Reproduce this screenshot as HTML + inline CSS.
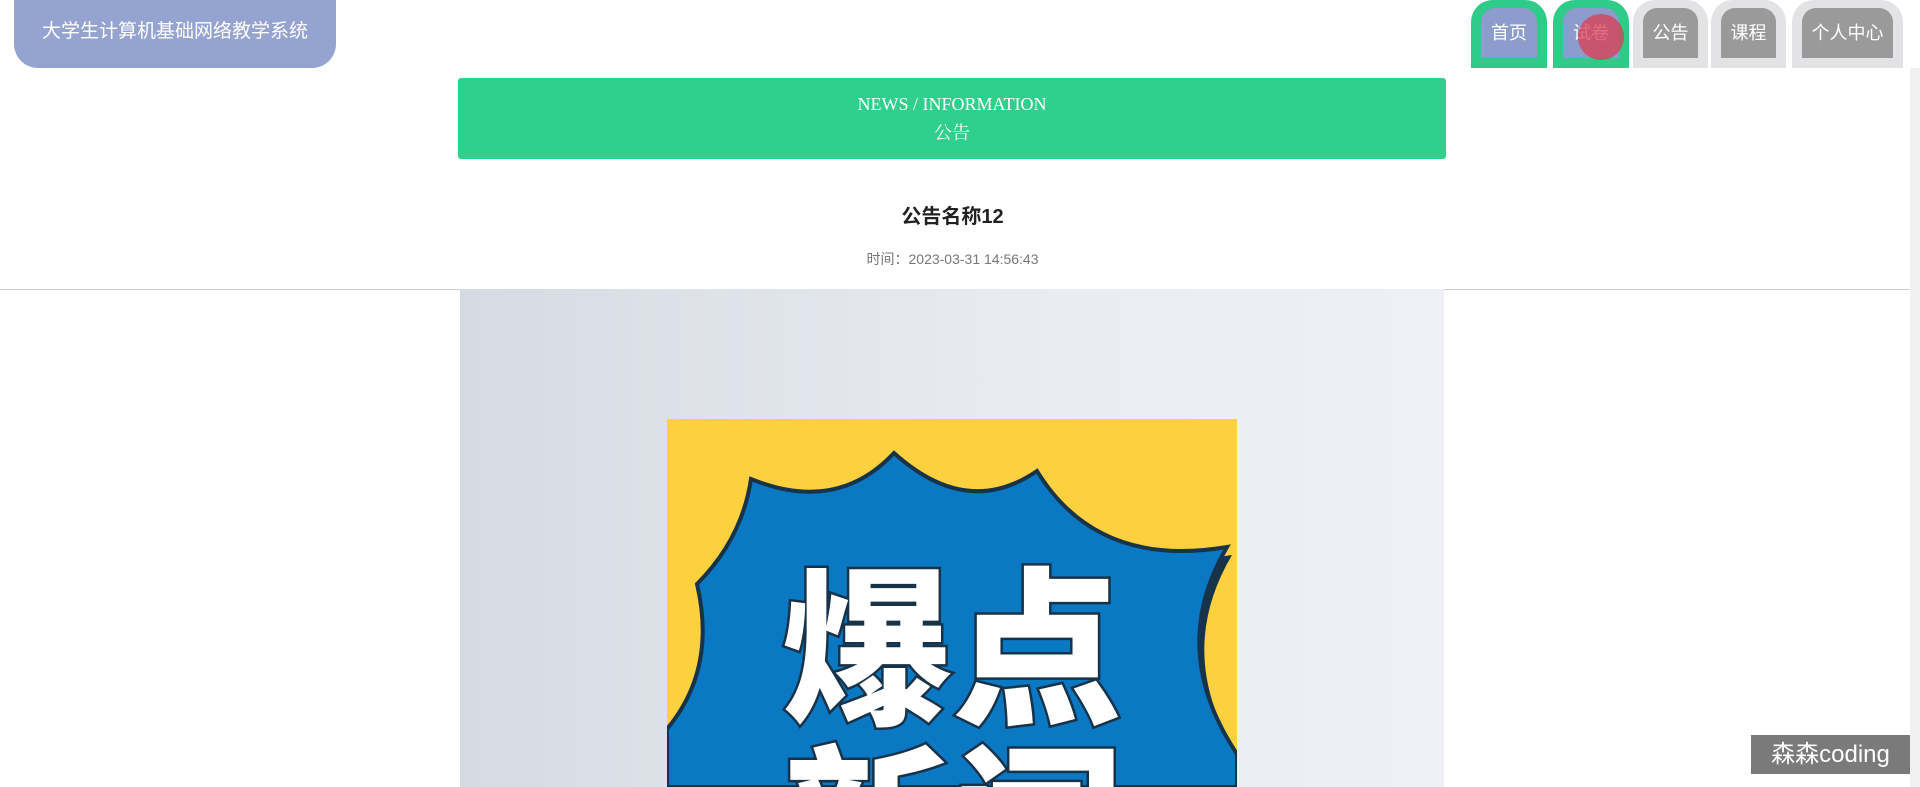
<!DOCTYPE html>
<html><head><meta charset="utf-8"><style>
*{margin:0;padding:0;box-sizing:border-box}
html,body{width:1920px;height:787px;overflow:hidden}
body{background:#fff;font-family:"Liberation Sans","Noto Sans CJK SC",sans-serif;position:relative}
.title{position:absolute;left:14px;top:0;width:322px;height:68px;background:#94a3cf;border-radius:0 0 24px 24px;color:#fff;font-size:19px;line-height:64px;text-align:center}
.tab{position:absolute;top:0;height:68px;border-radius:22px 22px 0 0}
.tab .in{position:absolute;left:10px;right:10px;top:8px;height:50px;border-radius:14px 14px 0 0;color:#fff;font-size:18px;text-align:center;line-height:50px}
.g{background:#2ecc88}.g .in{background:#8c9ccc}
.w{background:#e3e3e6}.w .in{background:#9a9a9a}
.banner{position:absolute;left:458px;top:78px;width:988px;height:81px;background:#2ed08c;border-radius:3px;color:#fff;text-align:center;font-family:"Liberation Serif","Noto Serif CJK SC",serif;font-size:18px;line-height:29px;padding-top:12px}
.h{position:absolute;left:0;width:1905px;text-align:center}
.img{position:absolute;left:460px;top:289px;width:984px;height:498px;background:linear-gradient(90deg,#d6dae2,#e9ecf2 60%,#eef0f6)}
.wm{position:absolute;left:1751px;top:735px;width:159px;height:39px;background:#7a7a7a;color:#fff;font-size:24px;line-height:39px;text-align:center}
</style></head><body>
<div class="title">大学生计算机基础网络教学系统</div>
<div class="tab g" style="left:1471px;width:76px"><div class="in">首页</div></div>
<div class="tab g" style="left:1553px;width:76px"><div class="in">试卷</div></div>
<div style="position:absolute;left:1578px;top:14px;width:46px;height:46px;border-radius:50%;background:rgba(220,60,80,.75)"></div>
<div class="tab w" style="left:1633px;width:75px"><div class="in">公告</div></div>
<div class="tab w" style="left:1711px;width:75px"><div class="in">课程</div></div>
<div class="tab w" style="left:1792px;width:111px"><div class="in">个人中心</div></div>
<div style="position:absolute;left:1910px;top:68px;width:10px;height:719px;background:#f1f1f1"></div>
<div class="banner">NEWS / INFORMATION<br>公告</div>
<div class="h" style="top:200px;font-size:20px;font-weight:bold;color:#222">公告名称12</div>
<div class="h" style="top:249px;font-size:14px;color:#777">时间：2023-03-31 14:56:43</div>
<div style="position:absolute;left:0;top:289px;width:1910px;height:1px;background:#ccc"></div>
<div class="img"></div>
<svg style="position:absolute;left:667px;top:419px" width="570" height="368" viewBox="0 0 570 368">
<rect width="570" height="368" fill="#fcd03f"/>
<path id="sb" d="M0,310 Q50,250 30,165 Q75,120 84,60 Q170,95 227,34 Q300,100 370,52 Q430,150 560,128 Q500,230 570,335 L570,368 L0,368 Z" fill="#173349" transform="translate(5,8)"/>
<path d="M0,310 Q50,250 30,165 Q75,120 84,60 Q170,95 227,34 Q300,100 370,52 Q430,150 560,128 Q500,230 570,335 L570,368 L0,368 Z" fill="#0a78c2" stroke="#173349" stroke-width="4"/>
<text x="115" y="292" font-family="Noto Sans CJK SC,sans-serif" font-weight="900" font-size="170" fill="#fff" stroke="#173349" stroke-width="5" paint-order="stroke">爆点</text>
<text x="115" y="470" font-family="Noto Sans CJK SC,sans-serif" font-weight="900" font-size="170" fill="#fff" stroke="#173349" stroke-width="5" paint-order="stroke">新闻</text>
</svg>
<div class="wm">森森coding</div>
</body></html>
